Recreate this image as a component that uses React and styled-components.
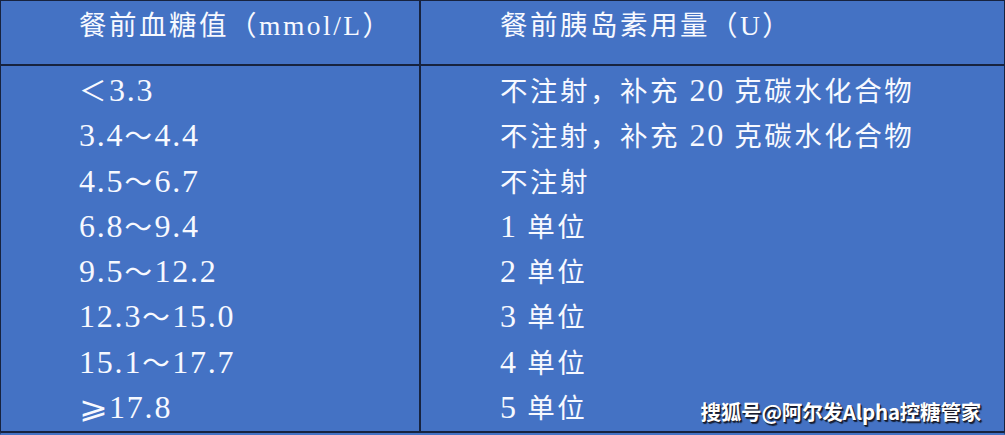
import styled, { createGlobalStyle } from 'styled-components';

const GlobalStyle = createGlobalStyle`
  html, body {
    margin: 0;
    padding: 0;
    background: #4472c4;
  }
`;

const Page = styled.div`
  position: relative;
  width: 1005px;
  height: 435px;
  box-sizing: border-box;
  background: #4472c4;
  overflow: hidden;
`;

const Table = styled.div`
  display: grid;
  grid-template-columns: 420px 1fr;
  grid-template-rows: 65px 367px;
  width: 1005px;
  height: 435px;
  box-sizing: border-box;
  border-top: 1.5px solid #17233f;
  border-left: 1.5px solid #17233f;
  border-right: 1.5px solid #17233f;
  border-bottom: 3px solid transparent;
  color: #f7f9ff;
  font-family: "Liberation Serif", "Noto Sans CJK SC", serif;
  font-size: 27.5px;
  letter-spacing: 2.5px;
`;

const Cell = styled.div`
  box-sizing: border-box;
  padding-left: ${(p) => (p.$first ? '78px' : '79px')};
  border-right: ${(p) => (p.$first ? '2px solid #17233f' : 'none')};
  border-bottom: 2px solid #17233f;
`;

const HeadText = styled.div`
  padding-top: 5px;
  line-height: 40px;
`;

const Lines = styled.div`
  padding-top: 3px;
  white-space: nowrap;
`;

const Row = styled.div`
  height: 45.3px;
  line-height: 45.3px;
`;

const Num = styled.span`
  font-size: 32px;
  letter-spacing: 1.8px;
  line-height: 0;
`;

const Sym = styled.span`
  display: inline-block;
  width: 30px;
  font-family: "DejaVu Sans", "Noto Sans CJK SC", sans-serif;
  font-weight: 300;
  font-size: 30px;
  line-height: 0;
  letter-spacing: 0;
  transform: scaleX(1.15);
  transform-origin: left center;
`;

const Watermark = styled.div`
  position: absolute;
  right: 24px;
  bottom: 9px;
  font-family: "Noto Sans CJK SC", "Liberation Sans", sans-serif;
  font-weight: 700;
  font-size: 20.5px;
  letter-spacing: -0.2px;
  color: #ffffff;
  text-shadow: 1px 1px 0 #1a1a2a, 1.5px 1.5px 1px rgba(0, 0, 0, 0.7);
`;

const rows = [
  ['＜3.3', '不注射，补充 20 克碳水化合物'],
  ['3.4～4.4', '不注射，补充 20 克碳水化合物'],
  ['4.5～6.7', '不注射'],
  ['6.8～9.4', '1 单位'],
  ['9.5～12.2', '2 单位'],
  ['12.3～15.0', '3 单位'],
  ['15.1～17.7', '4 单位'],
  ['⩾17.8', '5 单位'],
];

// wrap digit runs so the numbers come out at the larger size
const withNums = (text) =>
  text.split(/([0-9.]+|⩾)/).map((part, i) => {
    if (part === '⩾') return <Sym key={i}>{part}</Sym>;
    if (/^[0-9.]+$/.test(part)) return <Num key={i}>{part}</Num>;
    return part;
  });

const App = () => (
  <Page>
    <GlobalStyle />
    <Table>
      <Cell $first>
        <HeadText>餐前血糖值（mmol/L）</HeadText>
      </Cell>
      <Cell>
        <HeadText>餐前胰岛素用量（U）</HeadText>
      </Cell>
      <Cell $first>
        <Lines>
          {rows.map((r) => (
            <Row key={r[0]}>{withNums(r[0])}</Row>
          ))}
        </Lines>
      </Cell>
      <Cell>
        <Lines>
          {rows.map((r) => (
            <Row key={r[0]}>{withNums(r[1])}</Row>
          ))}
        </Lines>
      </Cell>
    </Table>
    <Watermark>搜狐号@阿尔发Alpha控糖管家</Watermark>
  </Page>
);

export default App;
